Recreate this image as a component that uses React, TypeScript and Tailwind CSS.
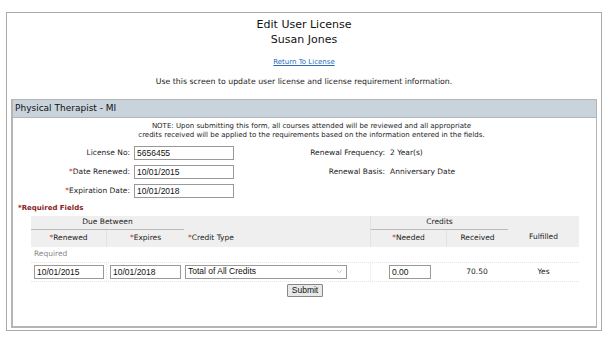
import { ChevronDown } from "lucide-react";

const font = "font-['DejaVu_Sans',sans-serif]";

function Req() {
  return <span className="text-[#c0392b]">*</span>;
}

function Field({
  label,
  value,
  required,
}: {
  label: string;
  value: string;
  required?: boolean;
}) {
  return (
    <div className="flex items-center h-[19px]">
      <div className="w-[121px] text-right pr-[4px] text-[7.5px] text-[#222]">
        {required && <Req />}
        {label}
      </div>
      <div className="w-[100px] h-[14px] border border-[#999] bg-white px-[2px] text-[8.5px] leading-[12px] font-['Liberation_Sans',sans-serif] text-[#111]">
        {value}
      </div>
    </div>
  );
}

function TextBox({ value, w }: { value: string; w: string }) {
  return (
    <div
      className={`${w} h-[14px] border border-[#999] bg-white px-[2px] text-[8.5px] leading-[12px] font-['Liberation_Sans',sans-serif] text-[#111]`}
    >
      {value}
    </div>
  );
}

export default function App() {
  return (
    <div className={`w-[612px] h-[341px] bg-white pt-[12px] px-[6px] ${font}`}>
      <div className="w-[596px] h-[319px] border border-[#aaa] pt-[4px] px-[4px]">
        {/* Title */}
        <div className="text-center text-[11px] leading-[15px] text-[#111]">
          <div>Edit User License</div>
          <div>Susan Jones</div>
        </div>
        <div className="text-center mt-[10px] text-[7px] leading-[10px]">
          <span className="text-[#2a6ebb] underline">Return To License</span>
        </div>
        <div className="text-center mt-[10px] text-[7.8px] leading-[10px] text-[#222]">
          Use this screen to update user license and license requirement information.
        </div>

        {/* License panel */}
        <div className="mt-[12px] h-[229px] border border-[#b5b5b5] border-l-2 border-b-2">
          <div className="h-[18px] bg-[#c9d3db] flex items-center px-[2px] text-[9px] text-[#111] border-b border-[#b0b8bf]">
            Physical Therapist - MI
          </div>
          <div className="text-center text-[7px] leading-[9px] text-[#222] mt-[4px] pl-[14px]">
            <div>
              NOTE: Upon submitting this form, all courses attended will be reviewed and all appropriate
            </div>
            <div>
              credits received will be applied to the requirements based on the information entered in the fields.
            </div>
          </div>

          <div className="flex mt-[3px]">
            <div className="flex flex-col">
              <Field label="License No:" value="5656455" />
              <Field label="Date Renewed:" value="10/01/2015" required />
              <Field label="Expiration Date:" value="10/01/2018" required />
            </div>
            <div className="flex flex-col text-[7.5px] text-[#222]">
              <div className="flex items-center h-[19px]">
                <div className="w-[156px] text-right pr-[5px]">Renewal Frequency:</div>
                <div>2 Year(s)</div>
              </div>
              <div className="flex items-center h-[19px]">
                <div className="w-[156px] text-right pr-[5px]">Renewal Basis:</div>
                <div>Anniversary Date</div>
              </div>
            </div>
          </div>

          <div className="mt-[3px] pl-[5px] text-[7px] font-bold text-[#8b1c1c]">
            *Required Fields
          </div>

          {/* Requirements table */}
          <div className="ml-[18px] w-[548px] mt-[2px] text-[7.5px] text-[#222]">
            <div className="flex bg-[#efefef] h-[31px]">
              <div className="w-[153px] flex flex-col">
                <div className="h-[14px] flex items-center justify-center border-b border-[#bbb]">
                  Due Between
                </div>
                <div className="flex flex-1">
                  <div className="w-[76px] flex items-center justify-center border-r border-[#e2e2e2]">
                    <Req />
                    Renewed
                  </div>
                  <div className="w-[77px] flex items-center justify-center">
                    <Req />
                    Expires
                  </div>
                </div>
              </div>
              <div className="w-[186px] flex flex-col">
                <div className="h-[14px]" />
                <div className="flex-1 flex items-center pl-[4px]">
                  <Req />
                  Credit Type
                </div>
              </div>
              <div className="w-[138px] flex flex-col border-l border-[#e2e2e2]">
                <div className="h-[14px] flex items-center justify-center border-b border-[#bbb]">
                  Credits
                </div>
                <div className="flex flex-1">
                  <div className="w-[76px] flex items-center justify-center border-r border-[#e2e2e2]">
                    <Req />
                    Needed
                  </div>
                  <div className="flex-1 flex items-center justify-center">Received</div>
                </div>
              </div>
              <div className="flex-1 flex items-center justify-center pt-[12px]">Fulfilled</div>
            </div>

            <div className="h-[15px] flex items-center pl-[3px] text-[#888]">Required</div>

            <div className="flex items-center h-[20px] border-y border-dotted border-[#e6e6e6]">
              <div className="w-[76px] pl-[3px] border-r border-dotted border-[#e6e6e6] h-full flex items-center">
                <TextBox value="10/01/2015" w="w-[70px]" />
              </div>
              <div className="w-[77px] pl-[3px] h-full flex items-center">
                <TextBox value="10/01/2018" w="w-[71px]" />
              </div>
              <div className="w-[186px] pl-[1px] h-full flex items-center">
                <div className="w-[162px] h-[14px] border border-[#999] bg-white px-[2px] flex items-center justify-between text-[8.5px] font-['Liberation_Sans',sans-serif] text-[#111]">
                  <span>Total of All Credits</span>
                  <ChevronDown className="w-[9px] h-[9px] text-[#888]" strokeWidth={1.25} />
                </div>
              </div>
              <div className="w-[76px] pl-[18px] h-full flex items-center border-l border-dotted border-[#e6e6e6]">
                <TextBox value="0.00" w="w-[42px]" />
              </div>
              <div className="w-[62px] text-center">70.50</div>
              <div className="flex-1 text-center">Yes</div>
            </div>

            <div className="flex justify-center mt-[2px] pr-[0px]">
              <button className="h-[13px] px-[4px] border border-[#888] bg-[#e8e8e8] text-[8.5px] leading-[11px] font-['Liberation_Sans',sans-serif] text-[#111] rounded-[1px]">
                Submit
              </button>
            </div>
          </div>
        </div>
      </div>
    </div>
  );
}
